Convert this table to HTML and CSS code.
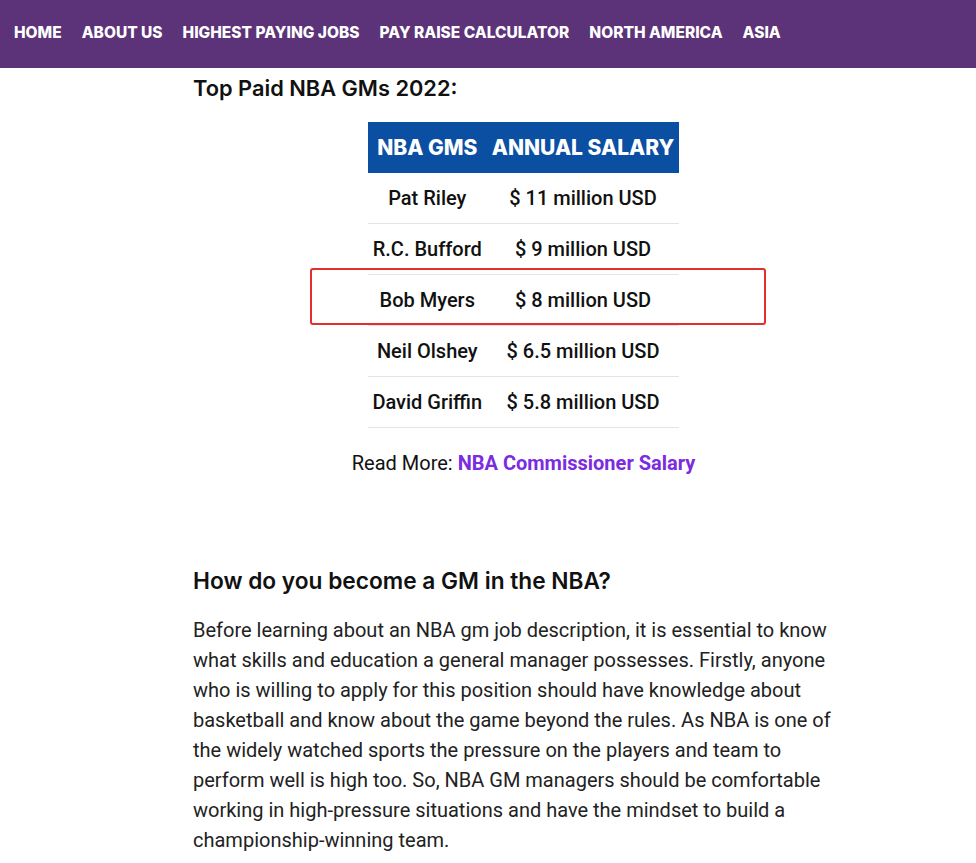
FILE: index.html
```html
<!DOCTYPE html>
<html lang="en">
<head>
    <meta charset="UTF-8">
    <meta name="viewport" content="width=device-width, initial-scale=1.0">
    <title>NBA GM Salary</title>
    <link rel="stylesheet" href="styles.css">
</head>
<body>
    <nav class="top-nav">
        <a href="#">HOME</a>
        <a href="#">ABOUT US</a>
        <a href="#">HIGHEST PAYING JOBS</a>
        <a href="#">PAY RAISE CALCULATOR</a>
        <a href="#">NORTH AMERICA</a>
        <a href="#">ASIA</a>
    </nav>

    <main class="article">
        <h3 class="section-title">Top Paid NBA GMs 2022:</h3>

        <div class="table-wrap">
            <table class="salary-table">
                <thead>
                    <tr>
                        <th class="col-name">NBA GMS</th>
                        <th class="col-salary">ANNUAL SALARY</th>
                    </tr>
                </thead>
                <tbody>
                    <tr><td>Pat Riley</td><td>$ 11 million USD</td></tr>
                    <tr><td>R.C. Bufford</td><td>$ 9 million USD</td></tr>
                    <tr class="marked"><td><span class="highlight-box"></span>Bob Myers</td><td>$ 8 million USD</td></tr>
                    <tr><td>Neil Olshey</td><td>$ 6.5 million USD</td></tr>
                    <tr><td>David Griffin</td><td>$ 5.8 million USD</td></tr>
                </tbody>
            </table>
        </div>

        <p class="read-more">Read More: <a href="#">NBA Commissioner Salary</a></p>

        <h2 class="section-title second">How do you become a GM in the NBA?</h2>

        <p class="body-text">
            Before learning about an NBA gm job description, it is essential to know
            what skills and education a general manager possesses. Firstly, anyone
            who is willing to apply for this position should have knowledge about
            basketball and know about the game beyond the rules. As NBA is one of
            the widely watched sports the pressure on the players and team to
            perform well is high too. So, NBA GM managers should be comfortable
            working in high-pressure situations and have the mindset to build a
            championship-winning team.
        </p>
    </main>
</body>
</html>
```

FILE: styles.css
```css
:root {
    --nav-bg: #5c3278;
    --table-blue: #0b4fa3;
    --link: #7b2be0;
    --text: #111111;
}

body {
    margin: 0;
    font-family: Roboto, 'Liberation Sans', sans-serif;
    color: var(--text);
    background: #ffffff;
}

.top-nav {
    background: var(--nav-bg);
    height: 68px;
    display: flex;
    align-items: center;
    gap: 20px;
    padding: 0 14px 4px;
    box-sizing: border-box;
}

.top-nav a {
    color: #ffffff;
    text-decoration: none;
    font-family: Inter, 'Open Sans', sans-serif;
    font-weight: 800;
    font-size: 15.5px;
    letter-spacing: 0;
}

.article {
    width: 661px;
    margin-left: 193px;
    padding-top: 5px;
}

.section-title {
    font-family: Inter, 'Open Sans', sans-serif;
    font-weight: 600;
    font-size: 21.8px;
    line-height: 30px;
    margin: 0 0 19px;
}

.section-title.second {
    font-size: 22.7px;
    margin: 88px 0 19px;
}

.table-wrap {
    display: flex;
    justify-content: center;
}

.salary-table {
    border-collapse: collapse;
    text-align: center;
}

.salary-table th {
    background: var(--table-blue);
    color: #ffffff;
    font-family: Inter, 'Open Sans', sans-serif;
    font-weight: 800;
    font-size: 21px;
    height: 51px;
    padding: 0 5px;
}

.salary-table th.col-name {
    width: 105px;
    padding: 0 7px;
}

.salary-table td {
    font-size: 20px;
    font-weight: 500;
    height: 50px;
    padding: 0;
    border-bottom: 1px solid #e4e4e4;
}

.marked td:first-child {
    position: relative;
}

.highlight-box {
    position: absolute;
    top: -7px;
    left: -58px;
    width: 452px;
    height: 53px;
    border: 2px solid #e2302d;
    border-radius: 3px;
}

.read-more {
    text-align: center;
    font-size: 20px;
    line-height: 30px;
    margin: 20px 0 0;
}

.read-more a {
    color: var(--link);
    font-weight: 700;
    text-decoration: none;
}

.body-text {
    font-size: 20px;
    line-height: 30px;
    color: #222222;
    margin: 0;
}
```
